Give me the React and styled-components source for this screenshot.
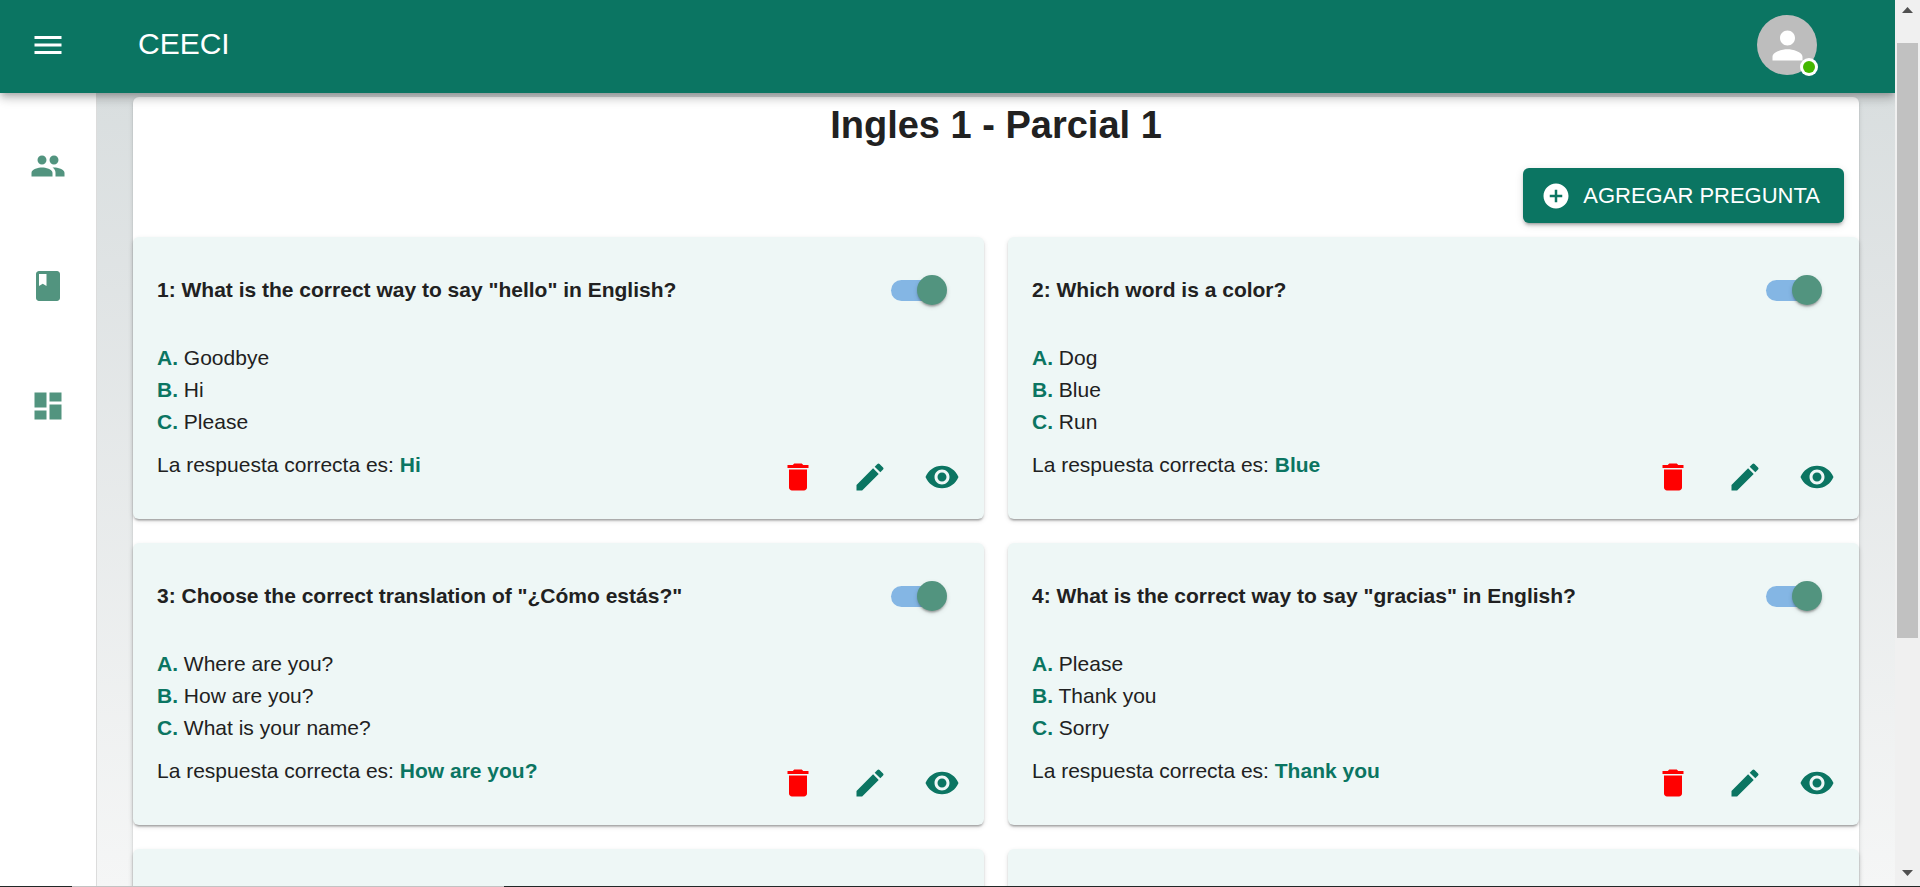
import React from "react";
import styled, { createGlobalStyle } from "styled-components";
import {
  MdMenu,
  MdPeople,
  MdBook,
  MdDashboard,
  MdDelete,
  MdEdit,
  MdVisibility,
  MdAddCircle,
  MdPerson,
} from "react-icons/md";

const GlobalStyle = createGlobalStyle`
  *, *::before, *::after { box-sizing: border-box; }
  body {
    margin: 0;
    font-family: "Liberation Sans", Arial, sans-serif;
    font-size: 21px;
    line-height: 32px;
    color: #212121;
    background: #fff;
  }
`;

const green = "#0b7562";
const softGreen = "#52947f";

const Screen = styled.div`
  display: flex;
  flex-direction: column;
  height: 100vh;
  overflow: hidden;
`;

const Viewport = styled.div`
  display: flex;
  flex: 1;
  min-height: 0;
`;

const Page = styled.div`
  display: flex;
  flex-direction: column;
  flex: 1;
  min-width: 0;
  overflow: hidden;
`;

const AppBar = styled.header`
  position: relative;
  z-index: 2;
  flex: none;
  display: flex;
  align-items: center;
  height: 93px;
  padding: 0 78px 3px 12px;
  background: ${green};
  color: #fff;
  box-shadow: 0 3px 6px -2px rgba(0, 0, 0, 0.2),
    0 6px 8px rgba(0, 0, 0, 0.14), 0 2px 15px rgba(0, 0, 0, 0.12);
`;

const IconButton = styled.button`
  display: flex;
  align-items: center;
  justify-content: center;
  width: 72px;
  height: 72px;
  padding: 0;
  border: 0;
  border-radius: 50%;
  background: none;
  color: ${(p) => p.$color || green};
  font-size: 36px;
  cursor: pointer;
`;

const Brand = styled.div`
  flex: 1;
  margin-left: 54px;
  padding-bottom: 2px;
  font-size: 30px;
`;

const Avatar = styled.button`
  position: relative;
  display: flex;
  align-items: center;
  justify-content: center;
  width: 60px;
  height: 60px;
  padding: 0;
  border: 0;
  border-radius: 50%;
  background: #bdbdbd;
  color: #fff;
  font-size: 45px;
  cursor: pointer;
`;

const OnlineDot = styled.span`
  position: absolute;
  right: 2px;
  bottom: 2px;
  width: 12px;
  height: 12px;
  border-radius: 50%;
  background: #44b700;
  box-shadow: 0 0 0 3px #fff;
`;

const Body = styled.div`
  display: flex;
  flex: 1;
  min-height: 0;
`;

const Sidebar = styled.nav`
  flex: none;
  display: flex;
  flex-direction: column;
  align-items: center;
  gap: 84px;
  width: 97px;
  padding-top: 55px;
  border-right: 1px solid #dcdcdc;
  background: #fff;
`;

const NavLink = styled.a`
  display: flex;
  color: ${softGreen};
  font-size: 36px;
`;

const Main = styled.main`
  flex: 1;
  min-width: 0;
  padding: 4px 36px 0;
  overflow: hidden;
  background: linear-gradient(#d9dedf, #f5f6f6);
`;

const Paper = styled.section`
  border-radius: 6px;
  background: #fff;
  box-shadow: 0 3px 2px -2px rgba(0, 0, 0, 0.2),
    0 2px 2px rgba(0, 0, 0, 0.14), 0 2px 5px rgba(0, 0, 0, 0.12);
`;

const Title = styled.h1`
  margin: 0;
  padding: 1px 0 16px;
  font-size: 38px;
  line-height: 54px;
  text-align: center;
`;

const Toolbar = styled.div`
  display: flex;
  justify-content: flex-end;
  padding: 0 15px 14px;
`;

const AddButton = styled.button`
  display: flex;
  align-items: center;
  gap: 12px;
  height: 55px;
  padding: 0 24px 0 18px;
  border: 0;
  border-radius: 6px;
  background: ${green};
  color: #fff;
  font: 22px "Liberation Sans", Arial, sans-serif;
  text-transform: uppercase;
  cursor: pointer;
  box-shadow: 0 4px 2px -3px rgba(0, 0, 0, 0.2),
    0 3px 3px rgba(0, 0, 0, 0.14), 0 2px 8px rgba(0, 0, 0, 0.12);

  svg {
    font-size: 30px;
  }
`;

const Questions = styled.div`
  display: grid;
  grid-template-columns: 1fr 1fr;
  gap: 24px;
`;

const Card = styled.article`
  min-height: 282px;
  padding: 24px 6px 6px 24px;
  border-radius: 6px;
  background: #eef7f6;
  box-shadow: 0 3px 2px -2px rgba(0, 0, 0, 0.2),
    0 2px 2px rgba(0, 0, 0, 0.14), 0 2px 5px rgba(0, 0, 0, 0.12);
`;

const CardHeader = styled.div`
  display: flex;
  align-items: center;
  justify-content: space-between;
  height: 58px;
  padding-right: 36px;
  margin-bottom: 23px;
`;

const Question = styled.h2`
  margin: 0;
  font-size: 21px;
`;

const Toggle = styled.input`
  appearance: none;
  display: flex;
  align-items: center;
  justify-content: flex-end;
  width: 51px;
  height: 21px;
  margin: 0;
  border-radius: 11px;
  background: #84b6e4;
  cursor: pointer;

  &::before {
    content: "";
    flex: none;
    width: 30px;
    height: 30px;
    margin-right: -5px;
    border-radius: 50%;
    background: ${softGreen};
    box-shadow: 0 3px 2px -2px rgba(0, 0, 0, 0.2),
      0 2px 2px rgba(0, 0, 0, 0.14), 0 2px 5px rgba(0, 0, 0, 0.12);
  }
`;

const Options = styled.ul`
  margin: 0;
  padding: 0;
  list-style: none;
`;

const Strong = styled.strong`
  color: ${green};
`;

const CardFooter = styled.div`
  display: flex;
  align-items: flex-start;
  justify-content: space-between;
  padding-top: 3px;
`;

const Answer = styled.p`
  margin: 0;
  padding-top: 8px;
`;

const Actions = styled.div`
  display: flex;
`;

const ScrollTrack = styled.div`
  flex: none;
  display: flex;
  flex-direction: column;
  align-items: center;
  width: 25px;
  padding: 7px 0 10px;
  background: #f0f0f0;
`;

const ScrollArrow = styled.svg`
  flex: none;
  width: 11px;
  height: 6px;
  fill: #505050;
`;

const ScrollRail = styled.div`
  flex: 1;
  align-self: stretch;
  padding: 30px 2px 0;
`;

const ScrollThumb = styled.div`
  height: 72%;
  background: #c1c1c1;
`;

const BottomEdge = styled.div`
  flex: none;
  display: flex;
  height: 1px;
  padding-left: 72px;
  background: #222827;

  &::before {
    content: "";
    width: 432px;
    background: #c3c3c3;
  }
`;

const questions = [
  {
    text: 'What is the correct way to say "hello" in English?',
    options: ["Goodbye", "Hi", "Please"],
    answer: "Hi",
  },
  {
    text: "Which word is a color?",
    options: ["Dog", "Blue", "Run"],
    answer: "Blue",
  },
  {
    text: 'Choose the correct translation of "¿Cómo estás?"',
    options: ["Where are you?", "How are you?", "What is your name?"],
    answer: "How are you?",
  },
  {
    text: 'What is the correct way to say "gracias" in English?',
    options: ["Please", "Thank you", "Sorry"],
    answer: "Thank you",
  },
];

function QuestionCard({ number, question }) {
  const titleId = `question-${number}`;
  return (
    <Card>
      <CardHeader>
        <Question id={titleId}>
          {number}: {question.text}
        </Question>
        <Toggle
          type="checkbox"
          role="switch"
          defaultChecked
          aria-labelledby={titleId}
        />
      </CardHeader>
      <Options>
        {question.options.map((option, i) => (
          <li key={option}>
            <Strong>{"ABC"[i]}.</Strong> {option}
          </li>
        ))}
      </Options>
      <CardFooter>
        <Answer>
          La respuesta correcta es: <Strong>{question.answer}</Strong>
        </Answer>
        <Actions>
          <IconButton $color="#ff0000" aria-label="Eliminar">
            <MdDelete />
          </IconButton>
          <IconButton aria-label="Editar">
            <MdEdit />
          </IconButton>
          <IconButton aria-label="Ver">
            <MdVisibility />
          </IconButton>
        </Actions>
      </CardFooter>
    </Card>
  );
}

export default function App() {
  return (
    <Screen>
      <GlobalStyle />
      <Viewport>
        <Page>
          <AppBar>
            <IconButton $color="#fff" aria-label="Menú">
              <MdMenu />
            </IconButton>
            <Brand>CEECI</Brand>
            <Avatar aria-label="Cuenta">
              <MdPerson />
              <OnlineDot />
            </Avatar>
          </AppBar>
          <Body>
            <Sidebar>
              <NavLink href="#usuarios" aria-label="Usuarios">
                <MdPeople />
              </NavLink>
              <NavLink href="#materias" aria-label="Materias">
                <MdBook />
              </NavLink>
              <NavLink href="#panel" aria-label="Panel">
                <MdDashboard />
              </NavLink>
            </Sidebar>
            <Main>
              <Paper>
                <Title>Ingles 1 - Parcial 1</Title>
                <Toolbar>
                  <AddButton>
                    <MdAddCircle />
                    Agregar pregunta
                  </AddButton>
                </Toolbar>
                <Questions>
                  {questions.map((question, i) => (
                    <QuestionCard
                      key={question.text}
                      number={i + 1}
                      question={question}
                    />
                  ))}
                  <Card />
                  <Card />
                </Questions>
              </Paper>
            </Main>
          </Body>
        </Page>
        <ScrollTrack aria-hidden="true">
          <ScrollArrow viewBox="0 0 11 6">
            <path d="M5.5 0 11 6H0z" />
          </ScrollArrow>
          <ScrollRail>
            <ScrollThumb />
          </ScrollRail>
          <ScrollArrow viewBox="0 0 11 6">
            <path d="M0 0h11L5.5 6z" />
          </ScrollArrow>
        </ScrollTrack>
      </Viewport>
      <BottomEdge />
    </Screen>
  );
}
